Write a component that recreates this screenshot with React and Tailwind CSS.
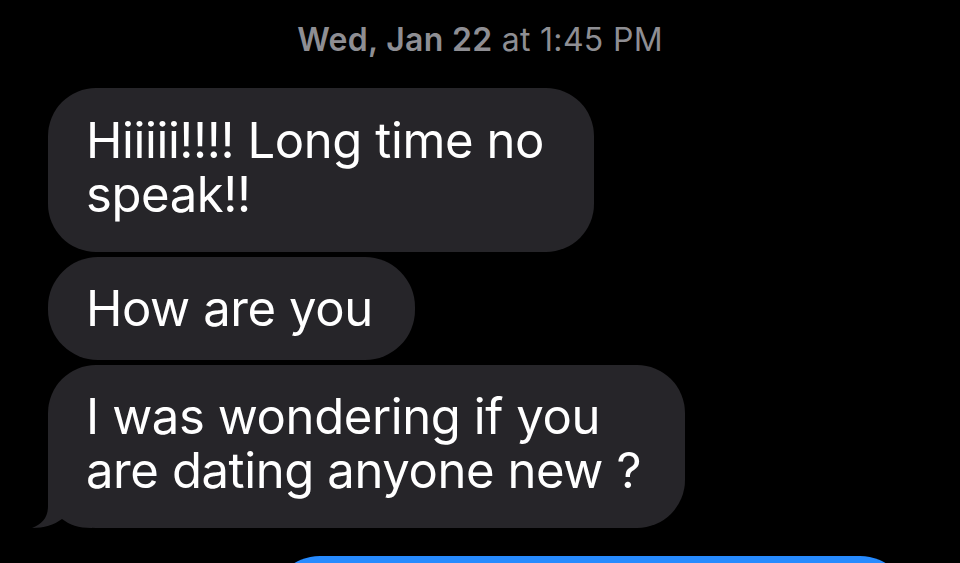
export default function App() {
  return (
    <div
      className="w-[960px] h-[563px] bg-black overflow-hidden relative"
      style={{ fontFamily: 'Inter, "Noto Sans", sans-serif' }}
    >
      <div className="pt-[22px] text-center text-[32px] leading-[35px] text-[#8e8e93] tracking-[0.3px]">
        <span className="font-semibold">Wed, Jan 22</span>
        <span className="font-normal"> at 1:45 PM</span>
      </div>
      <div className="flex flex-col items-start gap-[5px] pl-[48px] mt-[31px]">
        <div className="w-[546px] h-[164px] rounded-[48px] bg-[#262529] text-white text-[49px] leading-[54px] pl-[38px] pt-[26px] tracking-[-0.4px]">
          Hiiiii!!!! Long time no
          <br />
          speak!!
        </div>
        <div className="w-[367px] h-[103px] rounded-[50px] bg-[#262529] text-white text-[49px] leading-[54px] pl-[38px] pt-[25px] tracking-[-0.4px]">
          How are you
        </div>
        <div className="relative w-[637px] h-[163px] rounded-[48px] bg-[#262529] text-white text-[49px] leading-[54px] pl-[38px] pt-[25px] tracking-[-0.4px]">
          <svg
            className="absolute left-[-16px] bottom-0"
            width="60"
            height="50"
            viewBox="0 0 60 50"
          >
            <path
              d="M16 0 L16 28 C16 40 10 46 0 50 C12 50 22 47 30 41 C38 47 46 50 60 50 L60 0 Z"
              fill="#262529"
            />
          </svg>
          <span className="relative">
            I was wondering if you
            <br />
            are dating anyone new ?
          </span>
        </div>
      </div>
      <div className="absolute left-[270px] top-[556px] w-[640px] h-[120px] rounded-[50px] bg-[#278bff]" />
    </div>
  );
}
